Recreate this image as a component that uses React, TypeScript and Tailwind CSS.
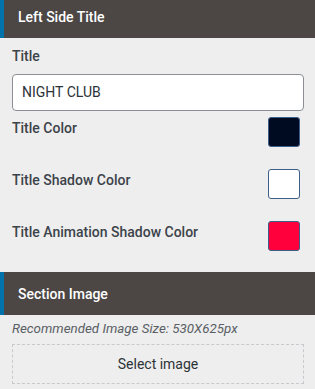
import React from "react";

function Header({ title, className = "" }: { title: string; className?: string }) {
  return (
    <div className={`flex h-[43px] items-center border-l-4 border-[#0073aa] bg-[#4c4745] pl-[14px] ${className}`}>
      <span className="text-[14px] font-medium leading-5 text-white">{title}</span>
    </div>
  );
}

function ColorRow({ label, color }: { label: string; color: string }) {
  return (
    <div className="flex items-start justify-between pr-[4px]">
      <span className="pt-[1px] text-[14px] font-medium leading-5 text-[#3c434a]">{label}</span>
      <div
        className="h-[30px] w-[32px] rounded-[3px] border border-[#3b5f8a]"
        style={{ backgroundColor: color }}
      />
    </div>
  );
}

export default function App() {
  return (
    <div className="h-[389px] w-[315px] overflow-hidden bg-[#eeeeee]" style={{ fontFamily: "Roboto, 'Liberation Sans', sans-serif" }}>
      <Header title="Left Side Title" className="-mt-[5px]" />
      <div className="pl-3 pr-[11px]">
        <div className="mt-2 text-[14px] font-medium leading-5 text-[#3c434a]">Title</div>
        <div className="mt-2 flex h-[37px] items-center rounded-[4px] border border-[#8c8f94] bg-white px-[9px] text-[14px] text-[#2c3338]">
          NIGHT CLUB
        </div>
        <div className="mt-[6px] flex flex-col gap-[22px]">
          <ColorRow label="Title Color" color="#000b22" />
          <ColorRow label="Title Shadow Color" color="#ffffff" />
          <ColorRow label="Title Animation Shadow Color" color="#ff003c" />
        </div>
      </div>
      <Header title="Section Image" className="mt-[21px]" />
      <div className="pl-3 pr-[11px]">
        <div className="mt-[5px] text-[13.35px] italic leading-[18px] text-[#5a5f65]">Recommended Image Size: 530X625px</div>
        <div className="mt-[6px] flex h-[40px] items-center justify-center border border-dashed border-[#c8c9cc] text-[14px] text-[#2c3338]">
          Select image
        </div>
      </div>
    </div>
  );
}
